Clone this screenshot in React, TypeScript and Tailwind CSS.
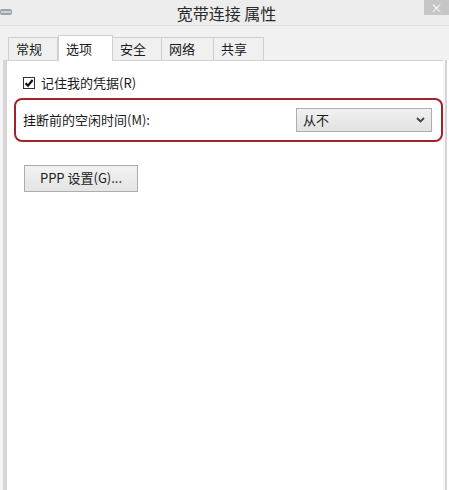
import React from "react";

const tabs = ["常规", "选项", "安全", "网络", "共享"];
const tabWidths = ["w-[50px]", "w-[55px]", "w-[50px]", "w-[53px]", "w-[51px]"];

export default function App() {
  return (
    <div
      className="flex h-[490px] w-[449px] flex-col overflow-hidden bg-[#f1f1f1] text-[12px] text-[#1a1a1a]"
      style={{ fontFamily: '"Noto Sans CJK SC", "Noto Sans", sans-serif' }}
    >
      {/* title bar */}
      <div className="relative flex h-[26px] shrink-0 items-center justify-center border-b border-[#e2e2e2] bg-[#ededed]">
        <svg width="12" height="8" viewBox="0 0 12 8" className="absolute top-[8px] left-[0px]">
          <rect x="0" y="1" width="12" height="6" rx="2" fill="#9aa3ad" />
          <rect x="1" y="3" width="10" height="2" fill="#c9d0d6" />
        </svg>
        <span className="pl-[4px] text-[16px] text-[#2a2a2a]">宽带连接 属性</span>
        <div className="absolute top-0 right-0 flex h-[15px] w-[25px] items-center justify-center bg-[#c6c6c6] text-[12px] leading-none text-white">
          ×
        </div>
      </div>

      {/* tabs */}
      <div className="flex h-[34px] shrink-0 items-end pl-[8px]">
        {tabs.map((t, i) => {
          const active = i === 1;
          return (
            <div
              key={t}
              className={
                active
                  ? "relative z-10 -mb-px flex h-[26px] w-[55px] items-start border border-b-0 border-[#cfcfcf] bg-white pt-[3px] pl-[7px] text-[13px]"
                  : `flex h-[23px] ${tabWidths[i]} items-center border border-b-0 border-[#cfcfcf] bg-[#f0f0f0] pl-[7px] text-[13px] ${i > 1 ? "-ml-px" : ""}`
              }
            >
              {t}
            </div>
          );
        })}
      </div>

      {/* panel */}
      <div className="flex shrink-0 grow">
        <div className="w-[3px] bg-[#f4f4f4]" />
        <div className="w-[3px] bg-[#d6d6d6]" />
        <div className="flex grow flex-col border-t border-l border-[#d3d3d3] bg-white pt-[12px]">
          <div className="flex items-center gap-[6px] pl-[16px]">
            <div className="flex h-[12px] w-[12px] items-center justify-center border border-[#333] bg-white">
              <svg width="10" height="10" viewBox="0 0 10 10">
                <path d="M1.5 5.2 L4 7.6 L8.6 2" fill="none" stroke="#111" strokeWidth="2.2" />
              </svg>
            </div>
            <span className="text-[13px]">记住我的凭据(R)</span>
          </div>

          <div className="mt-[5px] ml-[7px] flex h-[44px] items-center justify-between rounded-[8px] border-2 border-[#a1242b] pr-[9px] pl-[7px]">
            <span className="text-[13px]">挂断前的空闲时间(M):</span>
            <div className="flex h-[24px] w-[136px] items-center justify-between border border-[#adadad] bg-gradient-to-b from-[#f0f0f0] to-[#e2e2e2] px-[6px]">
              <span className="text-[13px]">从不</span>
              <svg width="9" height="6" viewBox="0 0 9 6">
                <path d="M1 1 L4.5 4.5 L8 1" fill="none" stroke="#444" strokeWidth="1.8" />
              </svg>
            </div>
          </div>

          <div className="mt-[23px] ml-[17px]">
            <div className="flex h-[27px] w-[114px] items-center justify-center border border-[#adadad] bg-gradient-to-b from-[#f2f2f2] to-[#e4e4e4] text-[13px]">
              PPP 设置(G)...
            </div>
          </div>
        </div>
        <div className="w-[2px] bg-[#f6f6f6]" />
        <div className="w-[2px] bg-[#d4d4d4]" />
        <div className="w-[2px] bg-white" />
      </div>
    </div>
  );
}
